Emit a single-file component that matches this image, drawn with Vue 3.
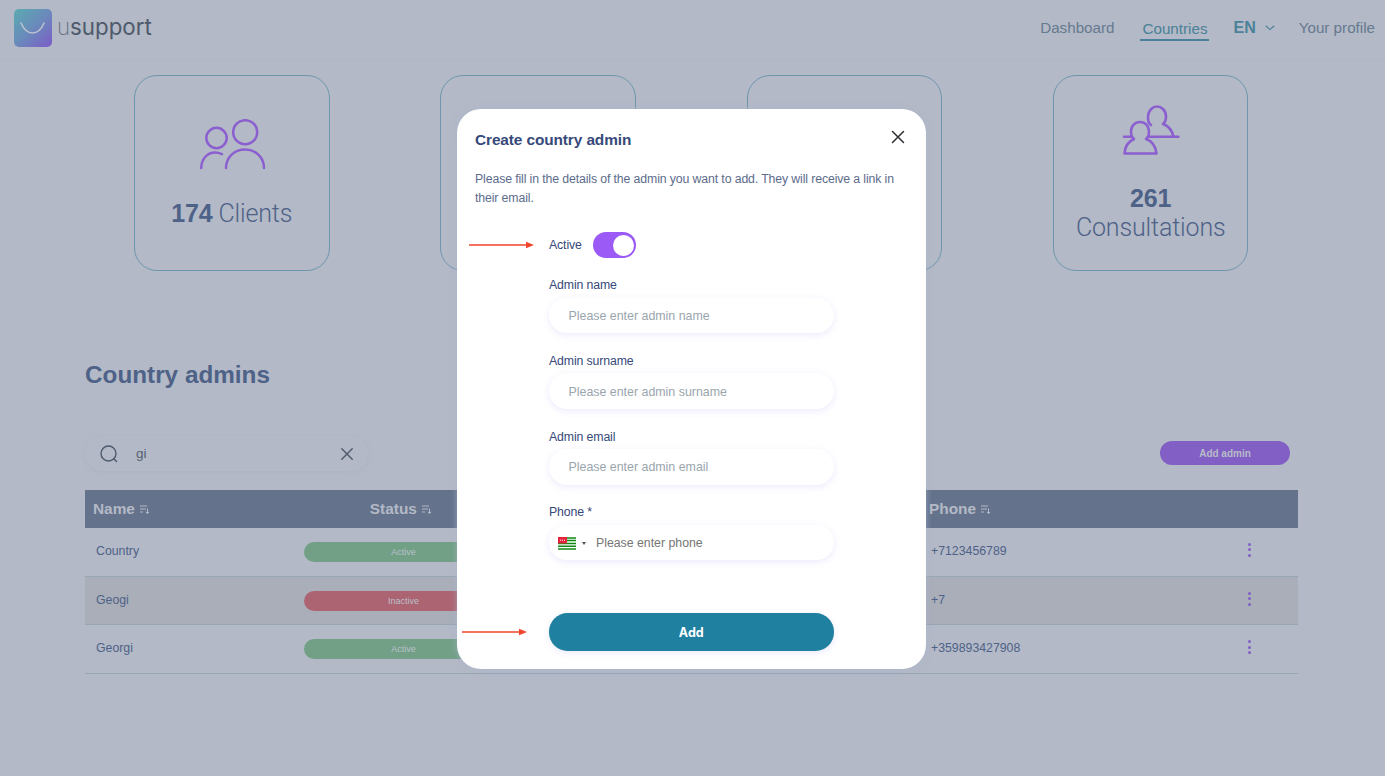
<script setup>
const rows = [
  { name: 'Country', status: 'Active', phone: '+7123456789', alt: false },
  { name: 'Geogi', status: 'Inactive', phone: '+7', alt: true },
  { name: 'Georgi', status: 'Active', phone: '+359893427908', alt: false }
]
const fields = [
  { label: 'Admin name', placeholder: 'Please enter admin name' },
  { label: 'Admin surname', placeholder: 'Please enter admin surname' },
  { label: 'Admin email', placeholder: 'Please enter admin email' }
]
</script>

<template>
  <div class="page">
    <header class="topbar">
      <div class="brand">
        <div class="logo">
          <svg width="38" height="38" viewBox="0 0 38 38"><path d="M7 14C10 21 14 24 18.500 24S27 21 30 14" fill="none" stroke="#bcc2cf" stroke-width="1.600" stroke-linecap="round"/></svg>
        </div>
        <span class="wordmark"><span class="thin">u</span>support</span>
      </div>
      <nav class="nav">
        <a class="link">Dashboard</a>
        <a class="link current">Countries</a>
        <span class="lang">
          <b>EN</b>
          <svg width="10" height="6" viewBox="0 0 10 6"><path d="M1 1l4 3.600L9 1" fill="none" stroke="#4b8199" stroke-width="1.100" stroke-linecap="round"/></svg>
        </span>
        <a class="link">Your profile</a>
      </nav>
    </header>

    <section class="cards">
      <div class="card">
        <svg width="70" height="54" viewBox="0 1 70 54" fill="none" stroke="#8c5fd0" stroke-width="2.500" stroke-linecap="round">
          <circle cx="19.500" cy="20" r="10.200"/>
          <circle cx="48.200" cy="14.200" r="12"/>
          <path d="M4.200 50C4.500 40 11 34.500 18 34.500c2 0 4 .3 7 1.600"/>
          <path d="M29 50c0-10.500 8-18.500 19-18.500S67 39.500 67 50"/>
        </svg>
        <p class="stat"><b>174</b> Clients</p>
      </div>
      <div class="card"></div>
      <div class="card"></div>
      <div class="card">
        <svg width="58" height="54" viewBox="0 0 58 54" fill="none" stroke="#8c5fd0" stroke-width="2.600" stroke-linecap="round" stroke-linejoin="round">
          <path d="M29 21C26.500 19.500 25.800 17 26 12.500c.3-6 4.500-10 9-10s9 4 9 10c0 3.500-1 6-3 7.500 6 2 9 6 10.500 12.800"/>
          <path d="M2 32.800h54.300"/>
          <path d="M12 35C10 33.500 9 30 9 27.500c0-5.500 4-9.500 9-9.500s9 4 9 9.500c0 3-1 6-3 7.500 6 2 9.500 7 10.500 14.500H2.500C3 42.500 6 37.500 12 35Z" fill="#b3b9c6"/>
        </svg>
        <p class="stat stacked"><b>261</b><span>Consultations</span></p>
      </div>
    </section>

    <h1 class="heading">Country admins</h1>

    <div class="tools">
      <div class="search">
        <svg width="18" height="18" viewBox="0 0 18 18" fill="none" stroke="#4e5a6c" stroke-width="1.400" stroke-linecap="round"><circle cx="8.500" cy="8.500" r="7.500"/><path d="M14 14l2.500 2.500"/></svg>
        <span class="query">gi</span>
        <svg class="clear" width="12" height="12" viewBox="0 0 12 12" stroke="#4e5a6c" stroke-width="1.400" stroke-linecap="round"><path d="M.8.800l10.400 10.400M11.200.800.800 11.200"/></svg>
      </div>
      <button class="add-admin">Add admin</button>
    </div>

    <div class="table">
      <div class="row head">
        <div class="cell-name">Name <svg class="sort" width="10" height="9" viewBox="0 0 10 9" fill="none" stroke="#b3b9c6" stroke-width="1"><path d="M0 1h7M0 4h6M0 7h3M7.500 3.500v5M5.800 7l1.700 1.500L9.200 7"/></svg></div>
        <div class="cell-status">Status <svg class="sort" width="10" height="9" viewBox="0 0 10 9" fill="none" stroke="#b3b9c6" stroke-width="1"><path d="M0 1h7M0 4h6M0 7h3M7.500 3.500v5M5.800 7l1.700 1.500L9.200 7"/></svg></div>
        <div></div>
        <div class="cell-phone">Phone <svg class="sort" width="10" height="9" viewBox="0 0 10 9" fill="none" stroke="#b3b9c6" stroke-width="1"><path d="M0 1h7M0 4h6M0 7h3M7.500 3.500v5M5.800 7l1.700 1.500L9.200 7"/></svg></div>
        <div></div>
      </div>
      <div v-for="r in rows" :key="r.name" class="row body" :class="{ alt: r.alt }">
        <div class="cell-name">{{ r.name }}</div>
        <div class="cell-status"><span class="pill" :class="r.status === 'Active' ? 'on' : 'off'">{{ r.status }}</span></div>
        <div></div>
        <div class="cell-phone">{{ r.phone }}</div>
        <div class="kebab"><i></i><i></i><i></i></div>
      </div>
    </div>

    <div class="modal">
      <svg class="close" width="14" height="14" viewBox="0 0 14 14" stroke="#2d2d33" stroke-width="1.500" stroke-linecap="round"><path d="M1.500 1.500l11 11M12.500 1.500l-11 11"/></svg>
      <h2 class="modal-title">Create country admin</h2>
      <p class="modal-text">Please fill in the details of the admin you want to add. They will receive a link in their email.</p>

      <div class="form">
        <div class="active-row">
          <svg class="arrow arrow-top" width="66" height="8" viewBox="0 0 66 8"><path d="M0 4h58" stroke="#f0452a" stroke-width="1.300"/><path d="M57 .8 65 4l-8 3.200Z" fill="#f0452a"/></svg>
          <span>Active</span>
          <span class="toggle"><i></i></span>
        </div>
        <div v-for="f in fields" :key="f.label" class="field">
          <label>{{ f.label }}</label>
          <div class="input"><span class="ph">{{ f.placeholder }}</span></div>
        </div>
        <div class="field">
          <label>Phone *</label>
          <div class="input phone-input">
            <svg width="18" height="13" viewBox="0 0 18 13">
              <rect width="18" height="13" fill="#fff"/>
              <path d="M0 .9h18M0 3.600h18M0 6.500h18M0 9.300h18M0 12.100h18" stroke="#0f8a14" stroke-width="1.500"/>
              <rect width="9" height="6.500" fill="#e5233a"/>
              <path d="M2 3.200h5" stroke="#fff" stroke-width="1" stroke-dasharray="1 1"/>
            </svg>
            <span class="caret"></span>
            <span class="phone-ph">Please enter phone</span>
          </div>
        </div>
        <div class="submit-wrap">
          <svg class="arrow arrow-bottom" width="66" height="8" viewBox="0 0 66 8"><path d="M0 4h58" stroke="#f0452a" stroke-width="1.300"/><path d="M57 .8 65 4l-8 3.200Z" fill="#f0452a"/></svg>
          <button class="submit">Add</button>
        </div>
      </div>
    </div>
  </div>
</template>

<style>
html, body { margin: 0; background: #b3b9c6; }
</style>

<style scoped>
.page {
  position: relative;
  width: 1385px;
  height: 776px;
  overflow: hidden;
  background: #b3b9c6;
  font-family: "Liberation Sans", Arial, sans-serif;
}
.topbar {
  height: 60px;
  box-sizing: border-box;
  padding: 9px 8px 0 14px;
  display: flex;
  justify-content: space-between;
  align-items: flex-start;
  border-bottom: 1px solid #afb6c5;
}
.brand { display: flex; align-items: center; gap: 5px; }
.logo {
  width: 38px;
  height: 38px;
  border-radius: 5px;
  background: linear-gradient(135deg, #5aabb0 0%, #6a8abb 50%, #7c5cc8 100%);
}
.wordmark {
  font-family: Inter, sans-serif;
  font-size: 22.300px;
  color: #4e5a6c;
  position: relative;
  top: -2px;
}
.thin { font-weight: 200; color: #66707f; }
.nav { display: flex; align-items: center; gap: 24px; height: 38px; color: #667a90; }
.link { padding: 0 2px 2px; line-height: 21px; font-size: 15.200px; }
.link.current { color: #4b8199; border-bottom: 2px solid #4b8199; padding: 2px 2px 0; }
.lang { color: #4b8199; display: flex; align-items: center; gap: 9px; font-size: 16px; margin-right: -2px; }
.cards {
  margin: 15px 136.500px 0 134px;
  display: flex;
  justify-content: space-between;
}
.card {
  width: 195.500px;
  height: 196px;
  box-sizing: border-box;
  padding-top: 1.500px;
  border: 1px solid #6d97ae;
  border-radius: 23px;
  display: flex;
  flex-direction: column;
  align-items: center;
  justify-content: center;
}
.stat {
  margin: 25px 0 0;
  font-family: Roboto, sans-serif;
  font-weight: 300;
  font-size: 25px;
  letter-spacing: -.15px;
  line-height: 30px;
  color: #4e6288;
  text-align: center;
}
.stat b { font-weight: 700; font-family: "Liberation Sans", sans-serif; }
.stacked { display: flex; flex-direction: column; }
.heading {
  margin: 86px 0 0 85px;
  font-size: 24.300px;
  line-height: 36px;
  font-weight: 700;
  color: #4e6288;
}
.tools {
  margin: 43px 95px 0 85px;
  display: flex;
  justify-content: space-between;
  align-items: center;
}
.search {
  width: 283px;
  height: 35px;
  box-sizing: border-box;
  padding: 0 15px;
  border-radius: 18px;
  background: #b3b9c6;
  box-shadow: 0 1px 5px #acb3c4;
  display: flex;
  align-items: center;
  gap: 18px;
}
.query { flex: 1; font-size: 13.500px; color: #566173; }
.clear { flex: none; }
.add-admin {
  width: 130px;
  height: 24px;
  margin-top: -1px;
  border: 0;
  border-radius: 12px;
  background: #825fc5;
  color: #b7bcc9;
  font-family: "Liberation Sans", sans-serif;
  font-size: 10px;
  font-weight: 700;
}
.table { margin: 19px 87px 0 85px; }
.row {
  display: grid;
  grid-template-columns: 219px 199px 426px 1fr 98px;
  align-items: center;
}
.head {
  height: 38px;
  background: #64738b;
  color: #b3b9c6;
  font-size: 15.400px;
  font-weight: 700;
}
.head .cell-name { padding-left: 8px; }
.head .cell-status { text-align: center; margin-left: -5px; }
.sort { margin-left: 1px; }
.body {
  height: 48.700px;
  box-sizing: border-box;
  border-bottom: 1px solid #98a5b5;
  color: #4e6288;
  font-size: 12.300px;
}
.body.alt { background: #a9aeb9; }
.body .cell-name { padding-left: 11px; position: relative; top: -1px; }
.cell-phone { padding-left: 2px; }
.body .cell-phone { position: relative; top: -1px; }
.head .cell-phone { padding-left: 0; }
.pill {
  display: block;
  height: 20px;
  line-height: 20px;
  border-radius: 10px;
  text-align: center;
  font-size: 9px;
  color: #b9c0cb;
}
.pill.on { background: #72a086; }
.pill.off { background: #ad6472; }
.kebab { display: flex; flex-direction: column; gap: 2.500px; align-items: center; margin-top: -4px; }
.kebab i { width: 3px; height: 3px; border-radius: 50%; background: #825fc5; }
.modal {
  position: absolute;
  left: 457px;
  top: 109px;
  width: 469px;
  height: 560px;
  box-sizing: border-box;
  padding: 20px 18px 0;
  border-radius: 24px;
  background: #fff;
  box-shadow: 0 0 6px rgba(170, 178, 205, .7);
}
.close { position: absolute; right: 21px; top: 21px; }
.modal-title {
  margin: 0;
  font-size: 15.400px;
  letter-spacing: -.1px;
  line-height: 21px;
  font-weight: 700;
  color: #36497a;
}
.modal-text {
  margin: 20px 0 0;
  font-size: 12.300px;
  letter-spacing: -.12px;
  line-height: 18.500px;
  color: #5c6c8c;
}
.form { width: 284.500px; margin: 25px 0 0 74px; }
.active-row {
  position: relative;
  height: 26px;
  display: flex;
  align-items: center;
  gap: 11px;
  font-size: 12.300px;
  letter-spacing: -.12px;
  color: #36497a;
}
.arrow { position: absolute; }
.arrow-top { left: -80px; top: 9px; }
.arrow-bottom { left: -87px; top: 14.500px; }
.toggle {
  width: 43.500px;
  height: 26px;
  box-sizing: border-box;
  padding: 2.500px;
  border-radius: 13px;
  background: #9b59f5;
  display: flex;
  justify-content: flex-end;
}
.toggle i { width: 21px; height: 21px; border-radius: 50%; background: #fff; }
.field { margin-top: 19.800px; height: 56px; }
.active-row + .field { margin-top: 19px; }
.field label {
  display: block;
  font-size: 12.300px;
  letter-spacing: -.12px;
  line-height: 16px;
  margin-bottom: 4.500px;
  color: #36497a;
}
.input {
  height: 35.500px;
  box-sizing: border-box;
  padding: 1px 19.500px 0;
  border-radius: 18px;
  background: #fff;
  box-shadow: 0 2px 7px rgba(155, 150, 245, .2);
  display: flex;
  align-items: center;
}
.ph { font-size: 12.400px; color: #9aa5ad; }
.phone-input { padding-left: 9px; }
.caret {
  margin-left: 6px;
  border-left: 2.500px solid transparent;
  border-right: 2.500px solid transparent;
  border-top: 3px solid #555;
}
.phone-ph { margin-left: 10px; font-size: 12.300px; color: #757575; }
.submit-wrap { position: relative; margin-top: 53px; }
.submit {
  display: block;
  width: 100%;
  height: 37.300px;
  border: 0;
  border-radius: 18.500px;
  background: #20809f;
  color: #fff;
  font-family: Inter, sans-serif;
  font-size: 12.500px;
  font-weight: 700;
  box-shadow: 0 2px 7px rgba(155, 150, 245, .2);
}
</style>
